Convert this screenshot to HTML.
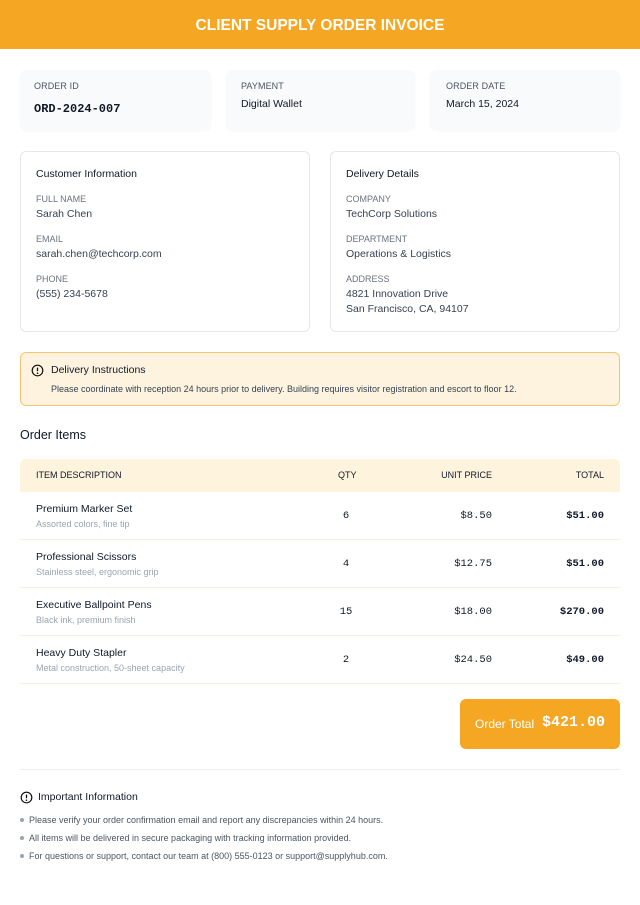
<!DOCTYPE html>
<html><head><meta charset="utf-8"><style>
*{margin:0;padding:0;box-sizing:border-box}
body{width:640px;height:905px;background:#fff;font-family:"Liberation Sans",sans-serif;color:#111827;position:relative;overflow:hidden}
.a{position:absolute}
.hdr{left:0;top:0;width:640px;height:49px;background:#F5A623;color:#fff;font-size:15.5px;font-weight:bold;text-align:center;line-height:51px}
.ic{background:#f8fafc;border-radius:6px;height:60px;top:70px;box-shadow:0 1px 2px rgba(0,0,0,.03)}
.lab{font-size:9px;color:#4b5563;text-transform:uppercase;letter-spacing:.1px}
.val{font-size:10.5px;color:#111827}
.mono{font-family:"Liberation Mono",monospace;font-weight:bold}
.card{border:1px solid #e5e7eb;border-radius:6px;top:151px;height:181px;width:290px}
.card .t{position:absolute;left:15px;top:16px;font-size:10.5px}
.card .l{position:absolute;left:15px;font-size:9px;color:#6b7280;text-transform:uppercase}
.card .v{position:absolute;left:15px;font-size:10.5px;color:#374151;line-height:15px}
.row{left:20px;width:600px;height:48px;border-bottom:1px solid #fbf1e0}
.row .n{position:absolute;left:16px;top:11px;font-size:10.5px}
.row .s{position:absolute;left:16px;top:27px;font-size:9px;color:#9ca3af}
.row .q{position:absolute;left:316px;width:20px;text-align:center;top:18px;font-size:10.5px;font-family:"Liberation Mono",monospace}
.row .u{position:absolute;right:128px;top:18px;font-size:10.5px;font-family:"Liberation Mono",monospace}
.row .tt{position:absolute;right:16px;top:18px;font-size:10.5px;font-family:"Liberation Mono",monospace;font-weight:bold}
.bl{left:20px;font-size:9px;color:#4b5563}
.bl:before{content:"";display:inline-block;width:4px;height:4px;border-radius:50%;background:#9ca3af;margin-right:5px;vertical-align:middle;position:relative;top:-1px}
</style></head><body>
<div class="a hdr">CLIENT SUPPLY ORDER INVOICE</div>

<div class="a ic" style="left:20px;width:191px"><div class="a lab" style="left:14px;top:11px">Order ID</div><div class="a mono" style="left:14px;top:32px;font-size:12px">ORD-2024-007</div></div>
<div class="a ic" style="left:226px;width:189px"><div class="a lab" style="left:15px;top:11px">Payment</div><div class="a val" style="left:15px;top:28px">Digital Wallet</div></div>
<div class="a ic" style="left:430px;width:190px"><div class="a lab" style="left:16px;top:11px">Order Date</div><div class="a val" style="left:16px;top:28px">March 15, 2024</div></div>

<div class="a card" style="left:20px">
<div class="t">Customer Information</div>
<div class="l" style="top:42px">Full Name</div><div class="v" style="top:55px">Sarah Chen</div>
<div class="l" style="top:82px">Email</div><div class="v" style="top:95px">sarah.chen@techcorp.com</div>
<div class="l" style="top:122px">Phone</div><div class="v" style="top:135px">(555) 234-5678</div>
</div>
<div class="a card" style="left:330px">
<div class="t">Delivery Details</div>
<div class="l" style="top:42px">Company</div><div class="v" style="top:55px">TechCorp Solutions</div>
<div class="l" style="top:82px">Department</div><div class="v" style="top:95px">Operations &amp; Logistics</div>
<div class="l" style="top:122px">Address</div><div class="v" style="top:135px">4821 Innovation Drive<br>San Francisco, CA, 94107</div>
</div>

<div class="a" style="left:20px;top:352px;width:600px;height:54px;background:#fef3df;border:1px solid #f6c56e;border-radius:6px">
<svg class="a" style="left:10px;top:11px" width="13" height="13" viewBox="0 0 13 13"><circle cx="6.5" cy="6.5" r="5.3" fill="none" stroke="#111" stroke-width="1.2"/><line x1="6.5" y1="3.6" x2="6.5" y2="7.2" stroke="#111" stroke-width="1.3"/><circle cx="6.5" cy="9.2" r=".8" fill="#111"/></svg>
<div class="a" style="left:30px;top:11px;font-size:10.5px">Delivery Instructions</div>
<div class="a" style="left:30px;top:31px;font-size:9px;color:#374151">Please coordinate with reception 24 hours prior to delivery. Building requires visitor registration and escort to floor 12.</div>
</div>

<div class="a" style="left:20px;top:428px;font-size:12.5px">Order Items</div>

<div class="a" style="left:20px;top:459px;width:600px;height:33px;background:#fef3dd;border-radius:6px 6px 0 0;font-size:9px">
<div class="a" style="left:16px;top:11px">ITEM DESCRIPTION</div>
<div class="a" style="left:318px;top:11px">QTY</div>
<div class="a" style="right:128px;top:11px">UNIT PRICE</div>
<div class="a" style="right:16px;top:11px">TOTAL</div>
</div>
<div class="a row" style="top:492px"><div class="n">Premium Marker Set</div><div class="s">Assorted colors, fine tip</div><div class="q">6</div><div class="u">$8.50</div><div class="tt">$51.00</div></div>
<div class="a row" style="top:540px"><div class="n">Professional Scissors</div><div class="s">Stainless steel, ergonomic grip</div><div class="q">4</div><div class="u">$12.75</div><div class="tt">$51.00</div></div>
<div class="a row" style="top:588px"><div class="n">Executive Ballpoint Pens</div><div class="s">Black ink, premium finish</div><div class="q">15</div><div class="u">$18.00</div><div class="tt">$270.00</div></div>
<div class="a row" style="top:636px"><div class="n">Heavy Duty Stapler</div><div class="s">Metal construction, 50-sheet capacity</div><div class="q">2</div><div class="u">$24.50</div><div class="tt">$49.00</div></div>

<div class="a" style="left:460px;top:699px;width:160px;height:50px;background:#F5A623;border-radius:6px;color:#fff">
<div class="a" style="left:15px;top:18px;font-size:12px">Order Total</div>
<div class="a mono" style="left:82px;top:15px;font-size:15px">$421.00</div>
</div>

<div class="a" style="left:20px;top:769px;width:600px;height:1px;background:#eeeeee"></div>
<svg class="a" style="left:20px;top:791px" width="13" height="13" viewBox="0 0 13 13"><circle cx="6.5" cy="6.5" r="5.3" fill="none" stroke="#111" stroke-width="1.2"/><line x1="6.5" y1="3.6" x2="6.5" y2="7.2" stroke="#111" stroke-width="1.3"/><circle cx="6.5" cy="9.2" r=".8" fill="#111"/></svg>
<div class="a" style="left:38px;top:791px;font-size:10.5px">Important Information</div>
<div class="a bl" style="top:815px">Please verify your order confirmation email and report any discrepancies within 24 hours.</div>
<div class="a bl" style="top:833px">All items will be delivered in secure packaging with tracking information provided.</div>
<div class="a bl" style="top:851px">For questions or support, contact our team at (800) 555-0123 or support@supplyhub.com.</div>
</body></html>
